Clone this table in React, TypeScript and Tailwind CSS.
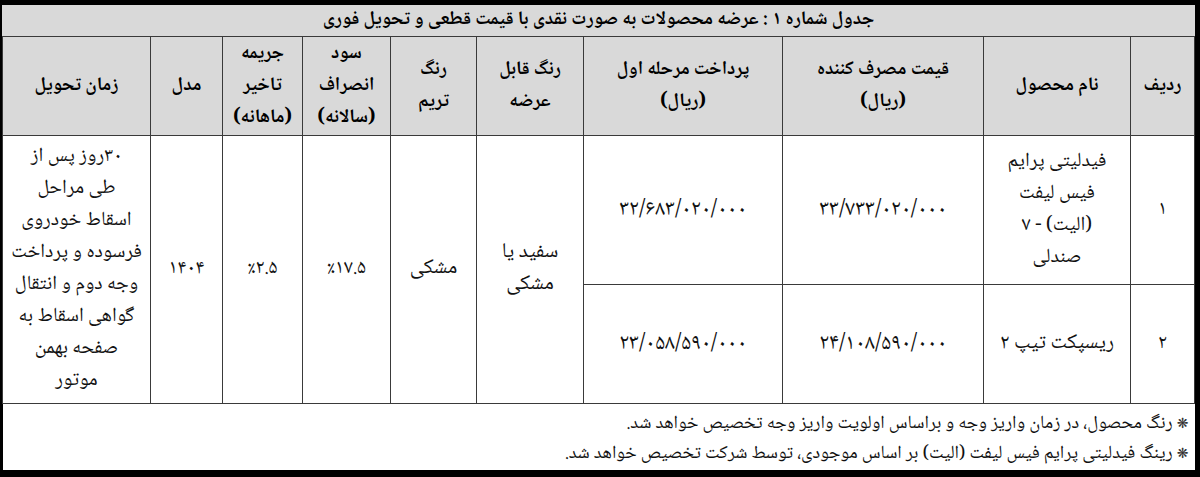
import React from "react"

const font = { fontFamily: "'Noto Naskh Arabic', 'Noto Sans Arabic', 'DejaVu Sans', sans-serif" }

const cols = [64, 147, 201, 199, 107, 86, 88, 80, 72, 148]

const th = "border border-[#3a3a3a] bg-[#d9d9d9] text-center align-middle font-bold text-[19px] leading-[32px] text-black"
const td = "border border-[#3a3a3a] bg-white text-center align-middle text-[20px] leading-[32px] text-[#111]"
const num = "border border-[#3a3a3a] bg-white text-center align-middle text-[22px] leading-[32px] tracking-[5px] text-[#111]"

export default function App() {
  return (
    <div className="w-[1200px] h-[477px] bg-white" style={font} dir="rtl">
      <div className="border-black border-t-[5px] border-r-[5px] border-b-[7px] border-l-[3px]">
        <table className="w-[1192px] table-fixed border-collapse">
          <colgroup>
            {cols.map((w, i) => (
              <col key={i} style={{ width: w }} />
            ))}
          </colgroup>
          <thead>
            <tr className="h-[31px]">
              <th colSpan={10} className="border-b border-[#3a3a3a] bg-[#d9d9d9] text-center font-bold text-[19px] leading-[30px] text-black">
                جدول شماره ۱ : عرضه محصولات به صورت نقدی با قیمت قطعی و تحویل فوری
              </th>
            </tr>
            <tr className="h-[99px]">
              <th className={th}>ردیف</th>
              <th className={th}>نام محصول</th>
              <th className={th}>
                قیمت مصرف کننده
                <br />
                (ریال)
              </th>
              <th className={th}>
                پرداخت مرحله اول
                <br />
                (ریال)
              </th>
              <th className={th}>
                رنگ قابل
                <br />
                عرضه
              </th>
              <th className={th}>
                رنگ
                <br />
                تریم
              </th>
              <th className={th}>
                سود
                <br />
                انصراف
                <br />
                (سالانه)
              </th>
              <th className={th}>
                جریمه
                <br />
                تاخیر
                <br />
                (ماهانه)
              </th>
              <th className={th}>مدل</th>
              <th className={th}>زمان تحویل</th>
            </tr>
          </thead>
          <tbody>
            <tr className="h-[149px]">
              <td className={td + " text-[19px]"}>۱</td>
              <td className={td}>
                فیدلیتی پرایم
                <br />
                فیس لیفت
                <br />
                (الیت) - ۷
                <br />
                صندلی
              </td>
              <td className={num}>۳۳/۷۳۳/۰۲۰/۰۰۰</td>
              <td className={num}>۳۲/۶۸۳/۰۲۰/۰۰۰</td>
              <td rowSpan={2} className={td + " text-[21px]"}>
                سفید یا
                <br />
                مشکی
              </td>
              <td rowSpan={2} className={td + " text-[21px]"}>مشکی</td>
              <td rowSpan={2} className={td + " text-[16px]"}>
                <span dir="ltr">٪۱۷.۵</span>
              </td>
              <td rowSpan={2} className={td + " text-[16px]"}>
                <span dir="ltr">٪۲.۵</span>
              </td>
              <td rowSpan={2} className={td + " text-[17px] tracking-[1px]"}>۱۴۰۴</td>
              <td rowSpan={2} className={td}>
                ۳۰روز پس از
                <br />
                طی مراحل
                <br />
                اسقاط خودروی
                <br />
                فرسوده و پرداخت
                <br />
                وجه دوم و انتقال
                <br />
                گواهی اسقاط به
                <br />
                صفحه بهمن
                <br />
                موتور
              </td>
            </tr>
            <tr className="h-[119px]">
              <td className={td + " text-[19px]"}>۲</td>
              <td className={td + " text-[21px]"}>ریسپکت تیپ ۲</td>
              <td className={num}>۲۴/۱۰۸/۵۹۰/۰۰۰</td>
              <td className={num}>۲۳/۰۵۸/۵۹۰/۰۰۰</td>
            </tr>
            <tr className="h-[66px]">
              <td colSpan={10} className="border-t border-[#3a3a3a] pr-[6px] pt-[6px] text-right align-top text-[18.5px] leading-[29px] text-[#111]">
                <div>
                  <span className="text-[14px] text-[#333]">❋</span> رنگ محصول، در زمان واریز وجه و براساس اولویت واریز وجه تخصیص خواهد شد.
                </div>
                <div>
                  <span className="text-[14px] text-[#333]">❋</span> رینگ فیدلیتی پرایم فیس لیفت (الیت) بر اساس موجودی، توسط شرکت تخصیص خواهد شد.
                </div>
              </td>
            </tr>
          </tbody>
        </table>
      </div>
    </div>
  )
}
